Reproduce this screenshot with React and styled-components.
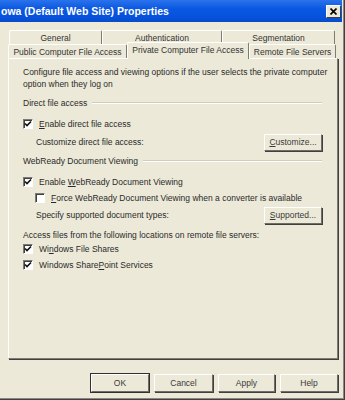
import React from 'react';
import styled, { createGlobalStyle } from 'styled-components';

const GlobalStyle = createGlobalStyle`
  html, body {
    margin: 0;
    padding: 0;
    background: #ECE9D8;
  }
  body {
    font-family: 'Liberation Sans', Arial, sans-serif;
    font-size: 8.5px;
    color: #2a2a2a;
  }
`;

const Window = styled.div`
  width: 345px;
  height: 400px;
  box-sizing: border-box;
  padding-right: 3px;
  background: #ECE9D8;
  box-shadow: inset -1px -1px #404040, inset -2px -2px #8a8880;
  display: flex;
  flex-direction: column;
`;

const TitleBar = styled.div`
  height: 22px;
  flex: none;
  display: flex;
  align-items: center;
  justify-content: space-between;
  padding: 0 1px 0 1px;
  background: linear-gradient(#2b73ec, #0a58e2 40%, #0652dc 80%, #0a4ac8);
`;

const TitleText = styled.span`
  color: #ffffff;
  font-weight: bold;
  font-size: 10.5px;
`;

const CloseButton = styled.div`
  width: 15px;
  height: 13px;
  box-sizing: border-box;
  background: #ECE9D8;
  border: 1px solid;
  border-color: #ffffff #404040 #404040 #ffffff;
  display: flex;
  align-items: center;
  justify-content: center;
`;

const Body = styled.div`
  flex: 1;
  display: flex;
  flex-direction: column;
  padding: 8px 1px 0 8px;
`;

const TabRow = styled.div`
  display: flex;
  height: 14px;
  margin-left: ${(p) => p.$indent || 0}px;
  position: relative;
`;

const Tab = styled.div`
  width: ${(p) => p.$w}px;
  box-sizing: border-box;
  display: flex;
  align-items: center;
  justify-content: center;
  border-top: 1px solid #ffffff;
  border-left: 1px solid #ffffff;
  border-right: 1px solid #7d7b72;
  border-radius: 2px 2px 0 0;
  white-space: nowrap;
  color: #333333;
`;

const ActiveTab = styled(Tab)`
  height: 17px;
  margin-top: -2px;
  padding-bottom: 2px;
  position: relative;
  z-index: 1;
  background: #ECE9D8;
`;

const Panel = styled.div`
  height: 301px;
  box-sizing: border-box;
  width: 330px;
  border: 1px solid;
  border-color: #ffffff #7d7b72 #7d7b72 #ffffff;
  box-shadow: 1px 1px 0 #404040;
  padding: 7px 15px 0 14px;
  display: flex;
  flex-direction: column;
`;

const Line = styled.div`
  display: flex;
  align-items: center;
  height: ${(p) => p.$h || 12}px;
  margin-top: ${(p) => p.$top || 0}px;
  padding-left: ${(p) => p.$indent || 0}px;
  white-space: nowrap;
`;

const Grow = styled.span`
  flex: 1;
`;

const GroupRule = styled.span`
  flex: 1;
  height: 0;
  margin-left: 5px;
  border-top: 1px solid #cfccbd;
  border-bottom: 1px solid #ffffff;
`;

const Box = styled.span`
  width: 10px;
  height: 10px;
  box-sizing: border-box;
  flex: none;
  background: #ffffff;
  border: 1px solid;
  border-color: #7d7b72 #ffffff #ffffff #7d7b72;
  box-shadow: inset 1px 1px #404040;
  margin-right: 6px;
  display: flex;
  align-items: center;
  justify-content: center;
`;

const Button = styled.div`
  width: ${(p) => p.$w || 58}px;
  height: ${(p) => p.$h || 17}px;
  box-sizing: border-box;
  display: flex;
  align-items: center;
  justify-content: center;
  background: #ECE9D8;
  border: 1px solid;
  border-color: #ffffff #6f6d66 #6f6d66 #ffffff;
  box-shadow: ${(p) => (p.$default ? '0 0 0 1px #303030' : '1px 1px 0 #404040')};
  color: #3a3a3a;
`;

const Footer = styled.div`
  display: flex;
  justify-content: flex-end;
  gap: 5px;
  padding: 15px 3px 0 0;
`;

function Check({ on }) {
  return (
    <Box>
      {on && (
        <svg width="8" height="8" viewBox="0 0 8 8">
          <path d="M1 3.5 L3 5.5 L7 1.5" fill="none" stroke="#111" strokeWidth="1.6" />
        </svg>
      )}
    </Box>
  );
}

export default function App() {
  return (
    <>
      <GlobalStyle />
      <Window>
        <TitleBar>
          <TitleText>owa (Default Web Site) Properties</TitleText>
          <CloseButton>
            <svg width="7" height="7" viewBox="0 0 7 7">
              <path d="M0.5 0.5 L6.5 6.5 M6.5 0.5 L0.5 6.5" stroke="#000" strokeWidth="1.6" />
            </svg>
          </CloseButton>
        </TitleBar>
        <Body>
          <TabRow $indent={1}>
            <Tab $w={93}>General</Tab>
            <Tab $w={120}>Authentication</Tab>
            <Tab $w={113}>Segmentation</Tab>
          </TabRow>
          <TabRow>
            <Tab $w={119}>Public Computer File Access</Tab>
            <ActiveTab $w={122}>Private Computer File Access</ActiveTab>
            <Tab $w={87}>Remote File Servers</Tab>
          </TabRow>
          <Panel>
            <Line>Configure file access and viewing options if the user selects the private computer</Line>
            <Line>option when they log on</Line>
            <Line $top={7}>
              Direct file access
              <GroupRule />
            </Line>
            <Line $top={9}>
              <Check on />
              <span><u>E</u>nable direct file access</span>
            </Line>
            <Line $top={3} $h={18} $indent={13}>
              Customize direct file access:
              <Grow />
              <Button><u>C</u>ustomize...</Button>
            </Line>
            <Line $top={4}>
              WebReady Document Viewing
              <GroupRule />
            </Line>
            <Line $top={9}>
              <Check on />
              <span>Enable <u>W</u>ebReady Document Viewing</span>
            </Line>
            <Line $top={4} $indent={12}>
              <Check />
              <span><u>F</u>orce WebReady Document Viewing when a converter is available</span>
            </Line>
            <Line $top={2} $h={18} $indent={13}>
              Specify supported document types:
              <Grow />
              <Button><u>S</u>upported...</Button>
            </Line>
            <Line $top={5}>Access files from the following locations on remote file servers:</Line>
            <Line $top={2}>
              <Check on />
              <span>Wi<u>n</u>dows File Shares</span>
            </Line>
            <Line $top={4}>
              <Check on />
              <span>Windows Share<u>P</u>oint Services</span>
            </Line>
          </Panel>
          <Footer>
            <Button $h={18} $default>OK</Button>
            <Button $h={18} $w={59}>Cancel</Button>
            <Button $h={18} $w={57}>Apply</Button>
            <Button $h={18}>Help</Button>
          </Footer>
        </Body>
      </Window>
    </>
  );
}
